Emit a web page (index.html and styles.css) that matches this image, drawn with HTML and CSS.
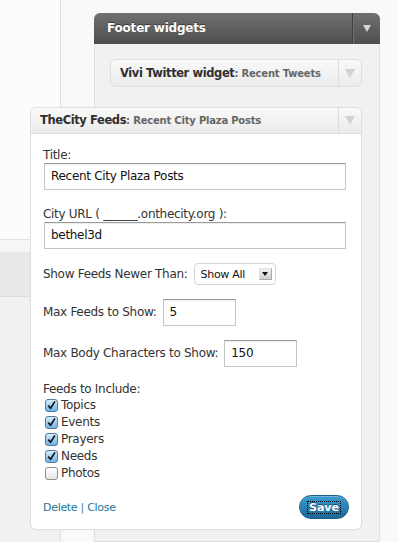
FILE: index.html
```html
<!DOCTYPE html>
<html>
<head>
<meta charset="utf-8">
<title>Widgets</title>
<link rel="stylesheet" href="styles.css">
</head>
<body>
<div class="page">
  <div class="menu">
    <div class="menu-top"></div>
    <div class="menu-sub"></div>
    <div class="menu-item"></div>
    <div class="menu-rest"></div>
  </div>
  <div class="gutter"></div>
  <div class="sidebar">
    <div class="sidebar-head">
      <h3 class="sidebar-title">Footer widgets</h3>
      <span class="toggle toggle-dark"><svg width="8" height="7" viewBox="0 0 8 7"><path d="M0 0H8L4 7Z" fill="#d4d4d4"/></svg></span>
    </div>
    <div class="sidebar-body">
      <div class="widget-top closed">
        <h4 class="widget-title">Vivi Twitter widget<span class="in-title">: Recent Tweets</span></h4>
        <span class="toggle"><svg width="10" height="9" viewBox="0 0 10 9"><path d="M0 0H10L5 9Z" fill="#d2d2d2"/></svg></span>
      </div>
    </div>
  </div>
  <div class="right"></div>
</div>

<div class="widget dragged">
  <div class="widget-top open">
    <h4 class="widget-title">TheCity Feeds<span class="in-title">: Recent City Plaza Posts</span></h4>
    <span class="toggle"><svg width="10" height="9" viewBox="0 0 10 9"><path d="M0 0H10L5 9Z" fill="#d2d2d2"/></svg></span>
  </div>
  <div class="widget-inside">
    <label class="label">Title:</label>
    <div class="text-input wide">Recent City Plaza Posts</div>

    <label class="label gap16">City URL ( ______.onthecity.org ):</label>
    <div class="text-input wide">bethel3d</div>

    <div class="row row-select">
      <span class="label-inline">Show Feeds Newer Than:</span>
      <div class="select">
        <span class="select-text">Show All</span>
        <span class="select-btn"><svg width="6" height="4" viewBox="0 0 6 4"><path d="M0 0H6L3 4Z" fill="#111"/></svg></span>
      </div>
    </div>

    <div class="row row-input">
      <span class="label-inline">Max Feeds to Show:</span>
      <div class="text-input short">5</div>
    </div>

    <div class="row row-input">
      <span class="label-inline">Max Body Characters to Show:</span>
      <div class="text-input short">150</div>
    </div>

    <div class="label feeds-label">Feeds to Include:</div>
    <ul class="checks">
      <li class="check"><span class="cb on"><svg width="13" height="13" viewBox="0 0 13 13"><path d="M2.6 6.6L5.4 9.8L10.6 1.6" fill="none" stroke="#151515" stroke-width="2" stroke-linejoin="round"/></svg></span>Topics</li>
      <li class="check"><span class="cb on"><svg width="13" height="13" viewBox="0 0 13 13"><path d="M2.6 6.6L5.4 9.8L10.6 1.6" fill="none" stroke="#151515" stroke-width="2" stroke-linejoin="round"/></svg></span>Events</li>
      <li class="check"><span class="cb on"><svg width="13" height="13" viewBox="0 0 13 13"><path d="M2.6 6.6L5.4 9.8L10.6 1.6" fill="none" stroke="#151515" stroke-width="2" stroke-linejoin="round"/></svg></span>Prayers</li>
      <li class="check"><span class="cb on"><svg width="13" height="13" viewBox="0 0 13 13"><path d="M2.6 6.6L5.4 9.8L10.6 1.6" fill="none" stroke="#151515" stroke-width="2" stroke-linejoin="round"/></svg></span>Needs</li>
      <li class="check"><span class="cb off"></span>Photos</li>
    </ul>

    <div class="widget-control">
      <div class="links"><a class="link">Delete</a> | <a class="link">Close</a></div>
      <button class="save"><span class="save-focus">Save</span></button>
    </div>
  </div>
</div>
</body>
</html>
```

FILE: styles.css
```css
html, body {
  margin: 0;
  padding: 0;
}
body {
  width: 398px;
  height: 542px;
  overflow: hidden;
  position: relative;
  background: #f9f9f9;
  font-family: "DejaVu Sans", "Liberation Sans", sans-serif;
  font-size: 12px;
  letter-spacing: -0.3px;
  color: #333;
}

/* background layout */
.page {
  display: flex;
  height: 542px;
}
.menu {
  width: 60px;
  border-right: 1px solid #dedede;
  display: flex;
  flex-direction: column;
}
.menu-top {
  height: 239px;
  background: #fcfcfc;
  border-bottom: 1px solid #e4e4e4;
}
.menu-sub {
  height: 12px;
  background: #f6f6f6;
}
.menu-item {
  height: 44px;
  background: #e9e9e9;
  border-bottom: 1px solid #dcdcdc;
}
.menu-rest {
  flex: 1;
  background: #f1f1f1;
}
.gutter {
  width: 33px;
  background: #f9f9f9;
}
.right {
  flex: 1;
  background: #f9f9f9;
}

/* footer widgets sidebar */
.sidebar {
  width: 286px;
  margin-top: 13px;
  display: flex;
  flex-direction: column;
}
.sidebar-head {
  height: 31px;
  display: flex;
  border-radius: 6px 6px 0 0;
  background: linear-gradient(#707070, #4e4e4e);
}
.sidebar-title {
  flex: 1;
  margin: 0;
  padding-left: 13px;
  line-height: 31px;
  font-size: 12px;
  letter-spacing: -0.2px;
  font-weight: bold;
  color: #fff;
  text-shadow: 0 -1px 0 #3a3a3a;
}
.toggle {
  width: 22px;
  border-left: 1px solid #dcdcdc;
  display: flex;
  align-items: center;
  justify-content: center;
}
.toggle-dark {
  width: 27px;
  border-left: 1px solid #404040;
  box-shadow: inset 1px 0 0 #6f6f6f;
}
.sidebar-body {
  flex: 1;
  background: #f1f1f1;
  border: 1px solid #dfdfdf;
  border-top: 0;
  padding: 15px 16px 0 15px;
}

/* widget title bars */
.widget-top {
  display: flex;
  height: 26px;
  background: linear-gradient(#f9f9f9, #ebebeb);
}
.widget-top.closed {
  border: 1px solid #dfdfdf;
  border-radius: 6px;
  width: 250px;
}
.widget-top.open {
  height: 25px;
  border-bottom: 1px solid #dfdfdf;
  border-radius: 5px 5px 0 0;
}
.widget-title {
  flex: 1;
  margin: 0;
  padding-left: 9px;
  font-size: 11.5px;
  letter-spacing: -0.4px;
  font-weight: bold;
  color: #2f2f2f;
  line-height: 26px;
  white-space: nowrap;
}
.widget-top.open .widget-title {
  line-height: 25px;
}
.in-title {
  font-size: 10px;
  letter-spacing: -0.2px;
  color: #666;
}

/* dragged widget */
.dragged {
  position: absolute;
  left: 30px;
  top: 107px;
  width: 332px;
  box-sizing: border-box;
  border: 1px solid #dfdfdf;
  border-radius: 6px;
  background: #fff;
  box-shadow: 0 0 1px rgba(0, 0, 0, 0.08);
}
.widget-inside {
  padding: 13px 12px 10px 12px;
  display: flex;
  flex-direction: column;
}
.label {
  display: block;
  line-height: 16px;
  white-space: nowrap;
}
.gap16 {
  margin-top: 16px;
}
.text-input {
  box-sizing: border-box;
  height: 27px;
  margin-left: 1px;
  padding: 0 6px;
  border: 1px solid #c4c4c4;
  border-top-color: #9a9a9a;
  box-shadow: inset 0 1px 1px rgba(0, 0, 0, 0.08);
  background: #fff;
  color: #111;
  line-height: 25px;
  white-space: nowrap;
}
.text-input.wide {
  width: 302px;
}
.text-input.short {
  width: 73px;
  margin-left: 6px;
}
.row {
  display: flex;
  margin-top: 14px;
  white-space: nowrap;
}
.row-select {
  align-items: center;
  height: 22px;
}
.row-input {
  align-items: baseline;
}
.label-inline {
  line-height: 16px;
}

/* select */
.select {
  box-sizing: border-box;
  margin-left: 6px;
  width: 82px;
  height: 22px;
  border: 1px solid #d6d6d6;
  border-radius: 4px;
  background: #fff;
  display: flex;
  align-items: center;
  padding: 0 3px 0 6px;
}
.select-text {
  flex: 1;
  font-size: 11px;
  letter-spacing: -0.3px;
  color: #111;
}
.select-btn {
  box-sizing: border-box;
  width: 13px;
  height: 12px;
  border: 1px solid #a8a8a8;
  border-top-color: #e0e0e0;
  border-left-color: #e0e0e0;
  background: linear-gradient(#f0f0f0, #cfcfcf);
  display: flex;
  align-items: center;
  justify-content: center;
}

/* checkboxes */
.feeds-label {
  margin-top: 15px;
  line-height: 15px;
}
.checks {
  list-style: none;
  margin: 0;
  padding: 0;
}
.check {
  display: flex;
  align-items: center;
  height: 17px;
  line-height: 17px;
}
.cb {
  box-sizing: border-box;
  width: 13px;
  height: 13px;
  margin: 0 3px 0 2px;
  border-radius: 3px;
  display: flex;
  align-items: center;
  justify-content: center;
}
.cb svg {
  display: block;
}
.cb.on {
  border: 1px solid #55799e;
  background: linear-gradient(#d8eefc, #9ccdf1 55%, #70b3e6);
}
.cb.off {
  border: 1px solid #8e8e8e;
  background: linear-gradient(#ffffff, #e6e6e6);
}

/* controls */
.widget-control {
  margin-top: 13px;
  height: 24px;
  display: flex;
  align-items: center;
  justify-content: space-between;
}
.links {
  font-size: 11px;
  letter-spacing: -0.3px;
  color: #4a86a8;
}
.link {
  color: #21759b;
  text-decoration: none;
}
.save {
  box-sizing: border-box;
  width: 50px;
  height: 24px;
  margin: 0;
  padding: 0;
  border: 1px solid #1d5f87;
  border-radius: 12px;
  background: linear-gradient(#3e9bd0, #2a82b6 50%, #1d6695);
  box-shadow: inset 0 1px 0 rgba(255, 255, 255, 0.25);
  display: flex;
  align-items: center;
  justify-content: center;
  font-family: "DejaVu Sans", sans-serif;
}
.save-focus {
  font-size: 11px;
  font-weight: bold;
  line-height: 11px;
  letter-spacing: 0;
  color: #fff;
  text-shadow: 0 -1px 0 #174a6a;
  outline: 1px dotted #000;
  outline-offset: 0;
  padding: 0 1px;
}
```
